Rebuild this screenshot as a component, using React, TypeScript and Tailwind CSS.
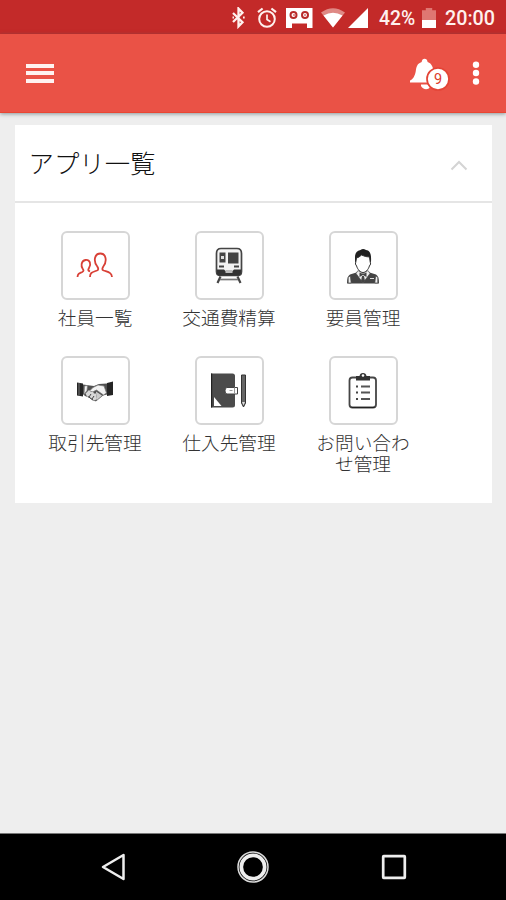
import React from "react";

function StatusBar() {
  return (
    <div className="flex h-[34px] items-center bg-[#c32a29] pl-[231px] pt-[1px] font-['Roboto',sans-serif] text-[19.3px] font-medium text-[#fff1ee]">
      <svg className="h-[22px] w-[15px]" viewBox="0 0 15 22" fill="none" stroke="#fff1ee" strokeWidth="2.3">
        <path d="M2 6l9.5 9.3L7.5 19.400V1.600L11.500 5.700 2 15" />
        <path d="M1.500 10.500h1.500M12 10.500h1.700" strokeWidth="2.200" />
      </svg>
      <svg className="ml-[11px] h-[22px] w-[20px]" viewBox="0 0 20 22" fill="none" stroke="#fff1ee" strokeWidth="2">
        <circle cx="10" cy="12" r="7.800" />
        <path d="M10 7.500V12.500l3.500 2.300" strokeWidth="1.700" />
        <path d="M1 5.200L5.600 1.500M19 5.200L14.400 1.500" strokeWidth="2.200" />
      </svg>
      <svg className="ml-[9px] h-[22px] w-[27px]" viewBox="0 0 27 22">
        <path d="M0 1h26.500v20h-5.500v-4.500h-15V21H0z" fill="#fff" />
        <g fill="#fff" stroke="#b82b2a" strokeWidth="2">
          <circle cx="7.500" cy="8" r="3" />
          <circle cx="19" cy="8" r="3" />
        </g>
        <path d="M7 8h2M18 8h2" stroke="#c32a29" />
      </svg>
      <svg className="ml-[7px] h-[22px] w-[26px]" viewBox="0 0 26 22">
        <path d="M1 5.500Q13-3 25 5.500L13 20.500z" fill="#df8985" />
        <path d="M3.500 8.500Q13 3 22.500 8.500L13 20.500z" fill="#fff" />
      </svg>
      <svg className="ml-[1px] h-[22px] w-[21px]" viewBox="0 0 21 22">
        <path d="M21 1v20H1z" fill="#fff" />
      </svg>
      <span className="ml-[11px] mt-[2px] w-[38px] whitespace-nowrap leading-[22px]">42%</span>
      <svg className="ml-[5px] h-[22px] w-[14px]" viewBox="0 0 14 22">
        <path d="M3.800 1h6.400v2.200H14V13H0V3.200h3.800z" fill="#df7772" />
        <path d="M0 13h14v8H0z" fill="#fff" />
      </svg>
      <span className="ml-[9px] mt-[2px] text-[19.700px] leading-[22px]">20:00</span>
    </div>
  );
}

function AppBar() {
  return (
    <header className="z-10 flex h-[79px] items-center justify-between border-b border-[#e94632] bg-[#ea5246] pl-[26px] pr-[26px] shadow-[0_1px_4px_rgba(70,90,95,0.6)]">
      <div className="flex w-[28px] flex-col gap-[3.5px]">
        <span className="h-[4px] bg-[#fff2f0]" />
        <span className="h-[4px] bg-[#fff2f0]" />
        <span className="h-[4px] bg-[#fff2f0]" />
      </div>
      <div className="flex items-center gap-[22px]">
        <svg className="mt-[2px] h-[36px] w-[42px]" viewBox="0 0 42 36">
          <path
            d="M2 26.500v-2c3-1 5-5 5.700-9 .7-5 1.500-8 6-9.500C13.700 1.500 19.500 1.500 19.600 6c4.400 1.500 5.500 5.500 6 10l4 10.500z"
            fill="#fff"
          />
          <path d="M13 28.500h9v2.500c-2 3.500-7.500 2.500-9-1z" fill="#fff" />
          <circle cx="30" cy="23" r="11" fill="#fff" stroke="#e34436" strokeWidth="1.700" />
          <text x="30" y="28" textAnchor="middle" fontFamily="Roboto, sans-serif" fontSize="14.500" fill="#dc3b2d">
            9
          </text>
        </svg>
        <svg className="h-[26px] w-[8px]" viewBox="0 0 8 26" fill="#fff">
          <circle cx="4" cy="4.700" r="3.200" />
          <circle cx="4" cy="13" r="3.200" />
          <circle cx="4" cy="21.500" r="3.200" />
        </svg>
      </div>
    </header>
  );
}

const PeopleIcon = () => (
  <svg viewBox="0 0 40 40" className="size-[40px]" fill="none" stroke="#d84036" strokeWidth="1.800">
    <path d="M15 31c0-4.500 2-4.700 7-6.500 1.700-.7 1.500-2 .3-4-2.400-3-2.800-6-2.300-8.500.7-3 2.500-4.500 5.300-4.500s4.600 1.500 5.200 4.500c.5 2.500.2 5.500-2.200 8.500-1.200 2-1.500 3.300.3 4C33.600 26.300 36.500 26.500 37 31" />
    <path d="M2.500 31c.3-3.500 1.800-3.700 4.800-5 1.500-.7 1.500-1.700.5-3-2-2.700-2-8 2.700-9 4.500-.5 6 4 3.500 8-1 1.700-1.300 2.500 1 3.500" />
  </svg>
);

const TrainIcon = () => (
  <svg viewBox="0 0 40 40" className="size-[40px]" fill="none" stroke="#454545">
    <path d="M12 2.500h16q4.500 0 4.500 5v18q0 4-4 4H11.500q-4 0-4-4V7.500q0-5 4.500-5z" fill="#f4f4f4" strokeWidth="1.700" />
    <path d="M10.500 6.500h6v10h-6zM19 6.500h10.500v11H19z" fill="#444" stroke="none" />
    <path d="M12 10h3v3h-3z" fill="#ddd" stroke="none" />
    <path d="M10 20.500h5M25 20.500h5" strokeWidth="1.900" />
    <path d="M8 23.500h7l2 2h6l2-2h7v4q-1 2-4 2H12q-4 0-4-2z" fill="#333" stroke="none" />
    <path d="M16.500 24h7v3h-7z" fill="#bbb" stroke="none" />
    <path d="M11.500 30.500l-3 6.500M28.500 30.500l3 6.500" strokeWidth="2.200" />
    <path d="M11 33.500h18" stroke="#777" strokeWidth="1.700" />
  </svg>
);

const BusinessmanIcon = () => (
  <svg viewBox="0 0 40 40" className="size-[40px]">
    <path d="M12 16v-5q0-6 5.500-7 2.500-2 5.500 0c4 .5 5.500 3.500 5 12z" fill="#202020" />
    <path d="M13.500 12q2.500-.5 5-3 4 2 8 2l.7 5q1.300 2-.8 4c-.8 3-3.500 6.500-6.400 6.500s-5.600-3.500-6.400-6.500q-2-2-.8-4z" fill="#fff" stroke="#333" strokeWidth="1" />
    <path d="M15 26L7 28.500Q4 30 4 37.500h32q0-7.500-3-9L25 26l-5 3z" fill="#444" />
    <path d="M15 24.500l-2 3 7 9.500 7-9.500-2-3-5 3zM5.200 31l2.200-1 .8 7H5.200zM34.800 31l-2.200-1-.8 7h3z" fill="#eee" stroke="#444" strokeWidth=".700" />
    <path d="M20 28l3.500-1.500v4.500L20 29l-3.500 2v-4.500zM19 30h2l1 5-2 2-2-2z" fill="#444" />
    <path d="M27 32.500h4" stroke="#ddd" />
  </svg>
);

const HandshakeIcon = () => (
  <svg viewBox="0 0 40 40" className="size-[40px]">
    <path d="M2 11.500l6 1v13l-6-1zM38 10.500l-6 1.500v13l6-1z" fill="#252525" />
    <path d="M4 12v12.500" stroke="#777" />
    <path d="M8 13.500l7 1 4 .5 5-2 8-.5v11l-4 1-6.500 5.500Q18 31 15 27l-5-2-2-2z" fill="#505050" />
    <path d="M9.500 15l3-.5-.5 5-3 4zM18 16.500l5-2.500 6 1 2.500 7-3 2-7-5-3 1.500q-3.500.7-3.500-1z" fill="#f2f2f2" stroke="#777" strokeWidth=".700" />
    <path d="M10.500 22.500l3.500-3.500 2 2 2-.5 1 2h2v3l1 2-2 2-3-1-2-2-3-1z" fill="#d8d8d8" />
    <path d="M13 25.500l5 3.500M16 23l-2 3M19 25l-2 3" stroke="#444" strokeWidth="1" />
    <path d="M21 20.500l6 4-5.500 5z" fill="#ccc" />
  </svg>
);

const NotebookIcon = () => (
  <svg viewBox="0 0 40 40" className="size-[40px]">
    <path d="M2 2.500h21.500q2.500 0 2.500 2.500v29q0 2.500-2.500 2.500H2z" fill="#4b4b4b" />
    <path d="M2 2.500h1.200v34H2z" fill="#222" />
    <path d="M5 26l7.500 9H5z" fill="#fff" />
    <path d="M18 16.500h10.500v6.500H18q-2 0-2-3.200t2-3.300z" fill="#fff" stroke="#444" />
    <path d="M20.500 19.500h3M25.500 16.500v6.500" stroke="#999" />
    <path d="M32.500 4h4v28l-2 4-2-4z" fill="#666" stroke="#333" strokeWidth="1" />
    <path d="M33 31h3L34.500 34.500z" fill="#ddd" />
  </svg>
);

const ClipboardIcon = () => (
  <svg viewBox="0 0 40 40" className="size-[40px]" fill="none" stroke="#454545">
    <rect x="6.500" y="6.500" width="26.500" height="30" rx="3" strokeWidth="1.800" fill="#fff" />
    <path d="M13 5h3.500Q17 2 20 2t3.500 3H27v4.500H13z" fill="#333" stroke="none" />
    <circle cx="20" cy="4.500" r="1.300" fill="#fff" stroke="none" />
    <path d="M8.500 36.500h23" stroke="#222" />
    <path d="M18 15.500H27M18 21.500H27M18 28H27" stroke="#555" strokeWidth="2.200" />
    <path d="M13 15.500h2M13 21.500h2M13 28h2" strokeWidth="2" />
  </svg>
);

const apps = [
  { name: "社員一覧", icon: <PeopleIcon /> },
  { name: "交通費精算", icon: <TrainIcon /> },
  { name: "要員管理", icon: <BusinessmanIcon /> },
  { name: "取引先管理", icon: <HandshakeIcon /> },
  { name: "仕入先管理", icon: <NotebookIcon /> },
  { name: "お問い合わせ管理", icon: <ClipboardIcon /> },
];

export default function App() {
  return (
    <div className="flex h-[900px] w-[506px] flex-col overflow-hidden bg-[#eeeeee] font-['Noto_Sans_CJK_JP',sans-serif]">
      <StatusBar />
      <AppBar />
      <main className="flex-1 pl-[14.5px] pr-[14.5px] pt-[12px]">
        <section className="h-[378px] bg-white">
          <div className="flex h-[78px] items-center justify-between border-b-2 border-[#e5e5e5] pl-[14px] pr-[24px]">
            <h1 className="pb-[2px] text-[25.4px] font-light leading-[36px] text-[#111]">アプリ一覧</h1>
            <svg className="mt-[4px] h-[12px] w-[18px]" viewBox="0 0 18 12" fill="none" stroke="#d4d4d4" strokeWidth="2">
              <path d="M1.500 10.500L9 3l7.500 7.500" />
            </svg>
          </div>
          <div className="grid w-[416px] grid-cols-[134px_134px_134px] pl-[13.5px] pt-[28px]">
            {apps.map((app) => (
              <div key={app.name} className="flex h-[125px] flex-col items-center">
                <div className="flex size-[69px] shrink-0 items-center justify-center rounded-[6px] border-2 border-[#d6d6d6]">
                  {app.icon}
                </div>
                <p className="mt-[6px] w-[98px] text-center text-[18.700px] font-light leading-[21px] text-[#333]">
                  {app.name}
                </p>
              </div>
            ))}
          </div>
        </section>
      </main>
      <nav className="flex h-[67px] items-center justify-between border-t border-[#777] bg-black pl-[100px] pr-[98px]">
        <svg className="h-[30px] w-[26px]" viewBox="0 0 26 30" fill="none" stroke="#eee" strokeWidth="2.500">
          <path d="M3 15L23.500 3v24z" strokeLinejoin="round" />
        </svg>
        <svg className="h-[34px] w-[34px]" viewBox="0 0 34 34" fill="none">
          <circle cx="17" cy="17" r="15" stroke="#ddd" strokeWidth="1.500" />
          <circle cx="17" cy="17" r="11.700" stroke="#eee" strokeWidth="3.700" />
        </svg>
        <svg className="h-[28px] w-[28px]" viewBox="0 0 28 28" fill="none">
          <rect x="3.200" y="3.200" width="21.600" height="21.600" rx=".500" stroke="#eee" strokeWidth="2.700" />
        </svg>
      </nav>
    </div>
  );
}
